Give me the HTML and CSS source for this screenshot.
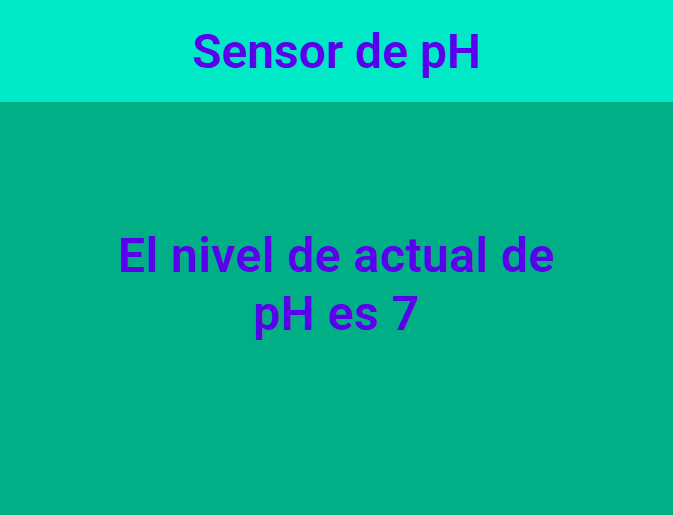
FILE: index.html
```html
<!DOCTYPE html>
<html lang="es">
<head>
<meta charset="utf-8">
<title>Sensor de pH</title>
<link rel="stylesheet" href="styles.css">
</head>
<body>
<div class="app">
  <header class="topbar">
    <h1 class="title">Sensor de pH</h1>
  </header>
  <main class="content">
    <p class="reading">El nivel de actual de<br>pH es 7</p>
  </main>
</div>
</body>
</html>
```
FILE: styles.css
```css
html, body {
  margin: 0;
  padding: 0;
  height: 100%;
}
body {
  font-family: Roboto, "Noto Sans", sans-serif;
  background: #00af86;
}
.app {
  display: flex;
  flex-direction: column;
  min-height: 100%;
}
.topbar {
  background: #00e9c7;
  height: 102px;
  display: flex;
  align-items: center;
  justify-content: center;
}
.title {
  margin: 0;
  color: #5b00ea;
  font-size: 48px;
  font-weight: 600;
  letter-spacing: 0;
}
.content {
  flex: 1;
  display: flex;
  justify-content: center;
  padding-top: 125px;
}
.reading {
  margin: 0;
  color: #5b00ea;
  font-size: 48px;
  font-weight: 600;
  line-height: 58px;
  text-align: center;
  letter-spacing: 0.5px;
}
```
